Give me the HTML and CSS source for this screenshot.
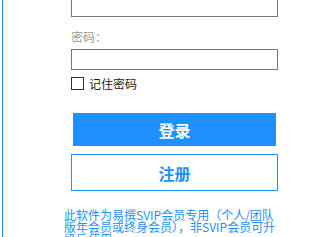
FILE: index.html
```html
<!DOCTYPE html>
<html lang="zh-CN">
    <head>
        <meta charset="UTF-8">
        <link rel="stylesheet" href="styles.css">
    </head>
    <body>
        <div class="panel">
            <form class="login-form" action="#">
                <input class="field" type="text" name="username">
                <label class="field-label" for="pwd">密码：</label>
                <input class="field" id="pwd" type="password" name="pwd">
                <div class="remember-row">
                    <span class="check-box"></span>
                    <span class="remember-text">记住密码</span>
                </div>
                <button class="btn btn-login" type="submit">登录</button>
                <button class="btn btn-register" type="button">注册</button>
            </form>
            <p class="notice">此软件为易撰SVIP会员专用（个人/团队版年会员或终身会员），非SVIP会员可升级后使用</p>
        </div>
    </body>
</html>
```

FILE: styles.css
```css
html, body {
    margin: 0;
    padding: 0;
    background: #fff;
    overflow: hidden;
}

body {
    font-family: "Noto Sans CJK SC", "Liberation Sans", sans-serif;
    font-size: 12px;
}

.panel {
    margin-left: 2px;
    height: 237px;
    border-left: 1px solid #1e90ff;
    overflow: hidden;
}

.login-form {
    display: flex;
    flex-direction: column;
    width: 207px;
    margin: -4px 0 0 68px;
}

.field {
    box-sizing: border-box;
    height: 21px;
    margin: 0;
    border: 1px solid #777;
    background: #fff;
    outline: none;
}

.field-label {
    margin: 13px 0 5px;
    line-height: 14px;
    color: #999;
}

.remember-row {
    display: flex;
    align-items: center;
    gap: 5px;
    margin-top: 7px;
    height: 13px;
}

.check-box {
    box-sizing: border-box;
    width: 13px;
    height: 13px;
    border: 1px solid #333;
}

.remember-text {
    color: #222;
    line-height: 13px;
}

.btn {
    box-sizing: border-box;
    font-family: inherit;
    font-size: 16px;
    font-weight: bold;
    padding: 0;
    cursor: pointer;
}

.btn-login {
    width: 203px;
    height: 33px;
    margin: 23px 0 0 2px;
    border: none;
    background: #1e90ff;
    color: #fff;
}

.btn-register {
    height: 37px;
    margin-top: 8px;
    border: 1px solid #1e90ff;
    background: #fff;
    color: #1e90ff;
}

.notice {
    width: 218px;
    margin: 18px 0 0 61px;
    line-height: 12px;
    color: #1e90ff;
}
```
